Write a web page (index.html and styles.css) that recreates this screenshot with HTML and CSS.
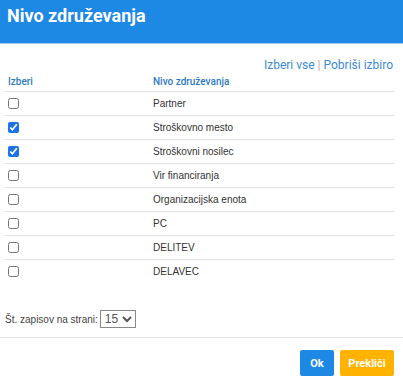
FILE: index.html
```html
<!DOCTYPE html>
<html lang="sl">
    <head>
        <title>Nivo združevanja</title>
        <meta charset="utf-8" />
        <link rel="stylesheet" href="styles.css">
    </head>
    <body>
        <div class="dialog-header">Nivo združevanja</div>
        <div class="dialog-body">
            <div class="select-links">
                <a href="#">Izberi vse</a> <span class="sep">|</span> <a href="#">Pobriši izbiro</a>
            </div>
            <table class="grid">
                <thead>
                    <tr>
                        <th class="col-check">Izberi</th>
                        <th>Nivo združevanja</th>
                    </tr>
                </thead>
                <tbody>
                    <tr><td class="col-check"><input type="checkbox" /></td><td>Partner</td></tr>
                    <tr><td class="col-check"><input type="checkbox" checked /></td><td>Stroškovno mesto</td></tr>
                    <tr><td class="col-check"><input type="checkbox" checked /></td><td>Stroškovni nosilec</td></tr>
                    <tr><td class="col-check"><input type="checkbox" /></td><td>Vir financiranja</td></tr>
                    <tr><td class="col-check"><input type="checkbox" /></td><td>Organizacijska enota</td></tr>
                    <tr><td class="col-check"><input type="checkbox" /></td><td>PC</td></tr>
                    <tr><td class="col-check"><input type="checkbox" /></td><td>DELITEV</td></tr>
                    <tr><td class="col-check"><input type="checkbox" /></td><td>DELAVEC</td></tr>
                </tbody>
            </table>
            <div class="pager">
                Št. zapisov na strani:
                <select>
                    <option>15</option>
                    <option>30</option>
                    <option>50</option>
                </select>
            </div>
        </div>
        <div class="dialog-footer">
            <button class="btn btn-ok" type="button">Ok</button>
            <button class="btn btn-cancel" type="button">Prekliči</button>
        </div>
    </body>
</html>
```

FILE: styles.css
```css
html, body {
    margin: 0px;
    padding: 0px;
    background: white;
    font-family: Roboto, "Liberation Sans", sans-serif;
}
.dialog-header {
    height: 44px;
    padding: 5px 0px 0px 7px;
    box-sizing: border-box;
    background: #1e88e5;
    border-bottom: 1px solid #a6c9f0;
    color: white;
    font-size: 18px;
    font-weight: bold;
    line-height: 22px;
}
.dialog-body {
    padding: 15px 9px 0px 5px;
}
.select-links {
    height: 12px;
    line-height: 12px;
    font-size: 12px;
    text-align: right;
    padding-right: 1px;
}
.select-links a {
    color: #3d8ad6;
    text-decoration: none;
}
.select-links .sep {
    color: #b0b0b0;
}
.grid {
    width: 100%;
    border-collapse: collapse;
}
.grid th {
    height: 20px;
    padding: 0px 5px 0px 0px;
    text-align: left;
    font-size: 10px;
    font-weight: 500;
    color: #2f7ac4;
    border-bottom: 1px solid #e2e2e2;
}
.grid td {
    height: 23px;
    padding: 0px 5px 0px 0px;
    font-family: "Liberation Sans", Arial, sans-serif;
    font-size: 10px;
    color: #333;
    border-bottom: 1px solid #e2e2e2;
}
.grid tbody tr:last-child td {
    border-bottom: none;
}
.grid .col-check {
    width: 140px;
    padding-left: 3px;
}
.grid input {
    display: block;
    margin: 0px;
    width: 11px;
    height: 11px;
    accent-color: #1a73e8;
}
.pager {
    margin-top: 27px;
    height: 18px;
    display: flex;
    align-items: center;
    gap: 2px;
    font-family: "Liberation Sans", Arial, sans-serif;
    font-size: 10px;
    color: #444;
}
.pager select {
    width: 36px;
    height: 18px;
    padding: 0px;
    border: 1px solid #888;
    border-radius: 0px;
    background: white;
    font-family: "Liberation Sans", Arial, sans-serif;
    font-size: 12px;
    color: #555;
}
.dialog-footer {
    margin-top: 9px;
    padding: 12px 9px 0px 0px;
    border-top: 1px solid #e5e5e5;
    display: flex;
    justify-content: flex-end;
    gap: 6px;
}
.btn {
    height: 26px;
    padding: 0px;
    border: none;
    border-radius: 2px;
    color: white;
    font-family: Roboto, sans-serif;
    font-size: 11px;
    font-weight: bold;
    cursor: pointer;
}
.btn-ok {
    width: 34px;
    background: #1e88e5;
}
.btn-cancel {
    width: 54px;
    background: #ffb300;
}
```
